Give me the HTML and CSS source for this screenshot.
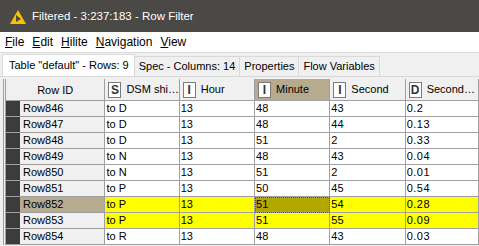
FILE: index.html
```html
<!DOCTYPE html>
<html lang="en">
<head>
  <meta charset="UTF-8">
  <title>Filtered - 3:237:183 - Row Filter</title>
  <link rel="stylesheet" href="styles.css">
</head>
<body>
  <div class="titlebar">
    <svg class="logo" width="16" height="14" viewBox="0 0 16 14">
      <polygon points="8,0 16,14 0,14" fill="#f5c400"/>
      <polygon points="6,5 11,9 6,12" fill="#4a4946"/>
    </svg>
    <span>Filtered - 3:237:183 - Row Filter</span>
  </div>

  <div class="menubar">
    <span><u>F</u>ile</span>
    <span><u>E</u>dit</span>
    <span><u>H</u>ilite</span>
    <span><u>N</u>avigation</span>
    <span><u>V</u>iew</span>
  </div>

  <div class="tabs">
    <div class="tab active">Table "default" - Rows: 9</div>
    <div class="tab">Spec - Columns: 14</div>
    <div class="tab">Properties</div>
    <div class="tab">Flow Variables</div>
  </div>

  <div class="frame">
    <table class="grid">
      <colgroup>
        <col style="width:14px"><col style="width:85px"><col style="width:74px"><col style="width:75px">
        <col style="width:75px"><col style="width:75px"><col style="width:73px">
      </colgroup>
      <thead>
        <tr>
          <th colspan="2" class="rowid-head">Row ID</th>
          <th><span class="type">S</span>DSM shi…</th>
          <th><span class="type">I</span>Hour</th>
          <th class="picked"><span class="type">I</span>Minute</th>
          <th><span class="type">I</span>Second</th>
          <th><span class="type">D</span>Second…</th>
        </tr>
      </thead>
      <tbody>
        <tr><td class="mark"></td><td class="rid">Row846</td><td>to D</td><td>13</td><td>48</td><td>43</td><td class="dbl">0.2</td></tr>
        <tr><td class="mark"></td><td class="rid">Row847</td><td>to D</td><td>13</td><td>48</td><td>44</td><td class="dbl">0.13</td></tr>
        <tr><td class="mark"></td><td class="rid">Row848</td><td>to D</td><td>13</td><td>51</td><td>2</td><td class="dbl">0.33</td></tr>
        <tr><td class="mark"></td><td class="rid">Row849</td><td>to N</td><td>13</td><td>48</td><td>43</td><td class="dbl">0.04</td></tr>
        <tr><td class="mark"></td><td class="rid">Row850</td><td>to N</td><td>13</td><td>51</td><td>2</td><td class="dbl">0.01</td></tr>
        <tr><td class="mark"></td><td class="rid">Row851</td><td>to P</td><td>13</td><td>50</td><td>45</td><td class="dbl">0.54</td></tr>
        <tr class="hilite focus"><td class="mark"></td><td class="rid">Row852</td><td>to P</td><td>13</td><td class="current">51</td><td>54</td><td class="dbl">0.28</td></tr>
        <tr class="hilite"><td class="mark"></td><td class="rid">Row853</td><td>to P</td><td>13</td><td>51</td><td>55</td><td class="dbl">0.09</td></tr>
        <tr><td class="mark"></td><td class="rid">Row854</td><td>to R</td><td>13</td><td>48</td><td>43</td><td class="dbl">0.03</td></tr>
      </tbody>
    </table>
  </div>
</body>
</html>
```

FILE: styles.css
```css
body {
  margin: 0;
  width: 479px;
  height: 246px;
  overflow: hidden;
  background-color: #f0f0f0;
  font-family: "Liberation Sans", Arial, sans-serif;
  color: #000;
}
.titlebar {
  height: 32px;
  background-color: #4a4946;
  color: #fff;
  font-size: 11.5px;
  display: flex;
  align-items: center;
  padding-left: 10px;
  gap: 6px;
}
.logo {
  margin-top: 1px;
}
.menubar {
  height: 20px;
  background-color: #fff;
  border-bottom: 1px solid #dadada;
  display: flex;
  align-items: center;
  padding-left: 5px;
  gap: 8px;
  font-size: 12px;
}
.tabs {
  display: flex;
  align-items: flex-end;
  height: 22px;
  padding-left: 2px;
  margin-top: 1px;
  border-bottom: 1px solid #d9d9d9;
}
.tab {
  height: 19px;
  line-height: 19px;
  padding: 0 4px;
  font-size: 11px;
  border: 1px solid #d9d9d9;
  border-bottom: none;
  border-left: none;
  background-color: #f0f0f0;
}
.tab.active {
  height: 21px;
  line-height: 20px;
  background-color: #fff;
  border-left: 1px solid #d9d9d9;
  padding: 0 5px 0 6px;
}
.frame {
  margin: 2px 2px 0 3px;
  border-left: 1px solid #a0a0a0;
  padding-left: 1px;
}
.grid {
  border-collapse: separate;
  border-spacing: 0;
  table-layout: fixed;
  width: 474px;
  font-size: 11px;
  background-color: #fff;
  border-left: 1px solid #a0a0a0;
}
.grid th {
  height: 21px;
  padding: 0 0 0 3px;
  font-weight: normal;
  text-align: left;
  background-color: #f0f0f0;
  border-right: 1px solid #a0a0a0;
  border-bottom: 1px solid #a0a0a0;
  white-space: nowrap;
  overflow: hidden;
}
.grid th.rowid-head {
  text-align: center;
  padding: 0;
}
.grid th.picked {
  background-color: #b6aa8f;
}
.type {
  display: inline-block;
  width: 11px;
  height: 14px;
  line-height: 14px;
  margin-right: 5px;
  border: 1px solid #7b7b7b;
  background-color: #fff;
  text-align: center;
  font-weight: bold;
  font-size: 12px;
  color: #333;
  vertical-align: middle;
}
.grid td {
  height: 15px;
  padding: 0 0 0 1px;
  border-right: 1px solid #a0a0a0;
  border-bottom: 1px solid #a0a0a0;
  white-space: nowrap;
  overflow: hidden;
  line-height: 15px;
}
.grid td.mark {
  background-color: #3c3c3c;
  border-right: none;
  padding: 0;
}
.grid td.rid {
  background-color: #f0f0f0;
  padding-left: 3px;
}
.grid td.dbl {
  letter-spacing: 0.5px;
}
.hilite td {
  background-color: #ffff00;
}
.focus td.rid {
  background-color: #b6aa8f;
}
.hilite td.current {
  background-color: #b3a800;
  outline: 1px dotted #555;
  outline-offset: -1px;
}
```
